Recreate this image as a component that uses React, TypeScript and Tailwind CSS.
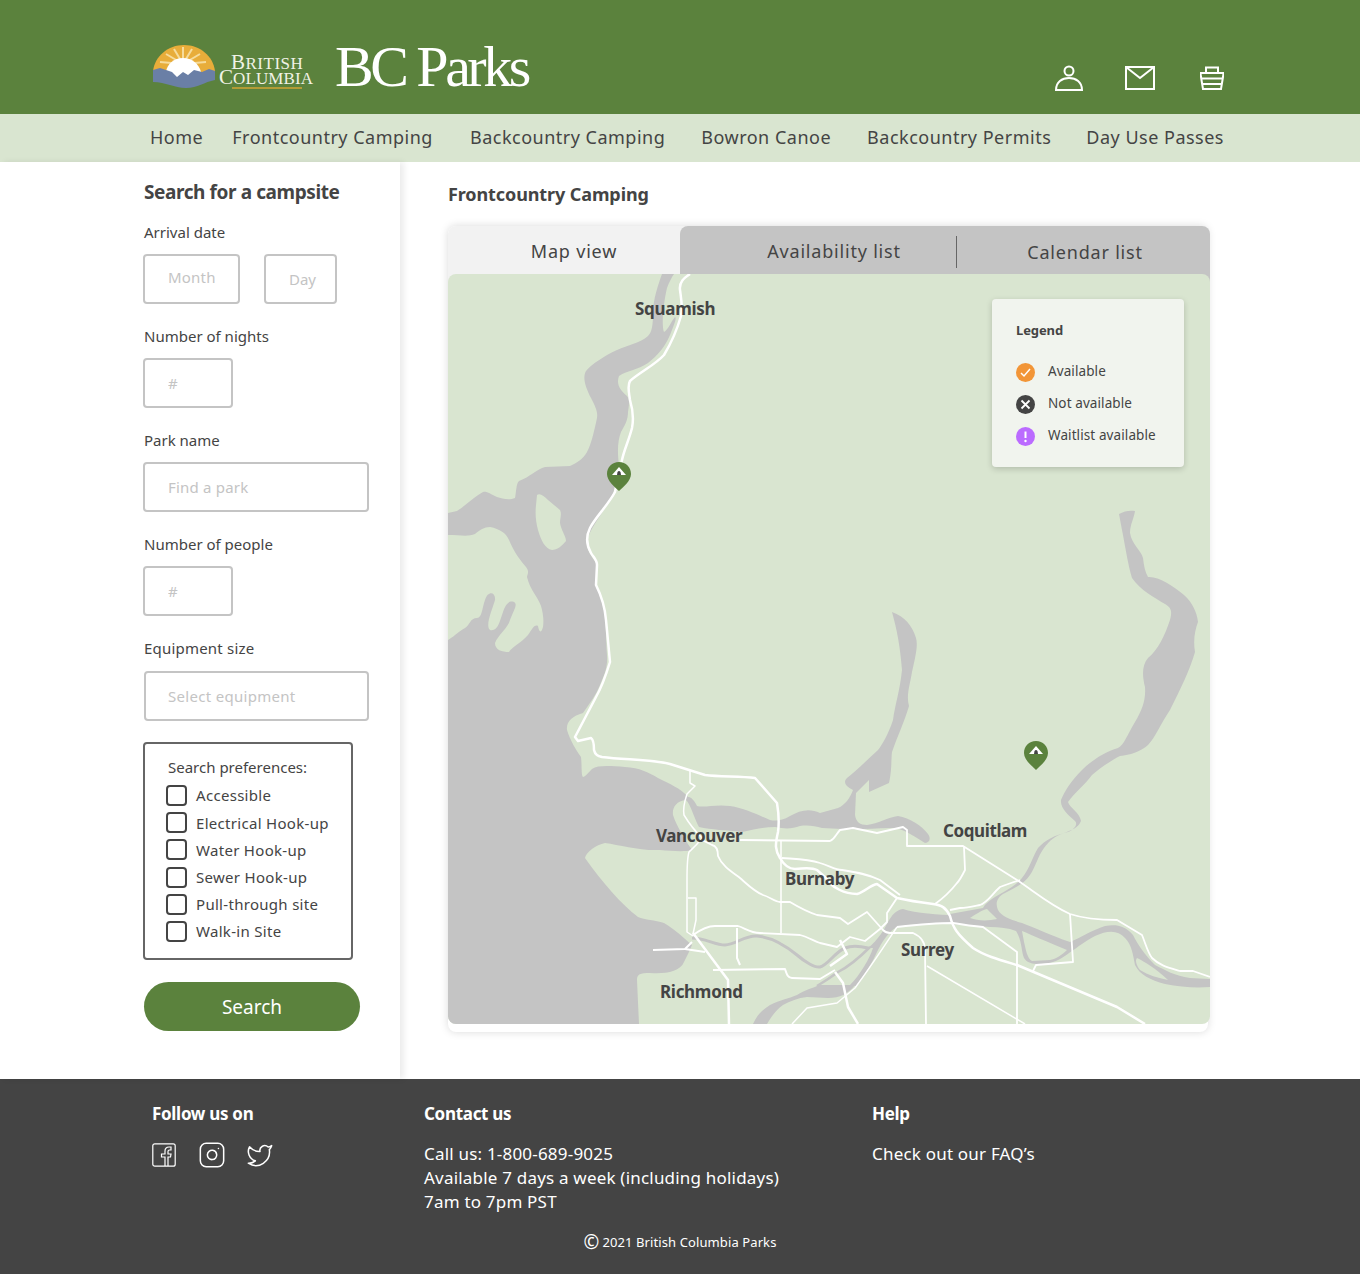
import { Instagram, Twitter } from "lucide-react";

const sans = "font-['Noto_Sans',sans-serif]";

const navItems = [
  { label: "Home", x: "ml-[150px]" },
  { label: "Frontcountry Camping", x: "ml-[29px]" },
  { label: "Backcountry Camping", x: "ml-[37px]" },
  { label: "Bowron Canoe", x: "ml-[36px]" },
  { label: "Backcountry Permits", x: "ml-[36px]" },
  { label: "Day Use Passes", x: "ml-[35px]" },
];

const prefs = ["Accessible", "Electrical Hook-up", "Water Hook-up", "Sewer Hook-up", "Pull-through site", "Walk-in Site"];

// howe sound + strait of georgia + burrard inlet + indian arm
const sea =
  "M662 274 C658 285 653 300 653 313 C653 325 652 332 648 336 C640 343 628 345 617 350 C604 356 592 364 586 371 C582 378 586 388 591 398 C595 406 598 411 597 418 C594 432 591 445 587 452 C583 459 577 463 570 466 L545 467 C537 469 530 477 519 481 C516 483 516 495 515 498 C508 501 502 498 497 497 C490 494 487 491 483 492 C475 496 465 506 457 511 L448 513 L448 535 C460 535 468 537 475 534 C480 530 484 527 490 527 C500 529 506 533 509 540 C514 552 520 560 526 567 C530 572 527 575 527 577 C530 590 538 597 541 606 C543 613 544 620 543 627 C541 634 539 632 538 626 C534 624 532 630 528 635 C522 642 512 647 509 652 C502 652 495 650 495 643 C498 635 508 628 510 620 C514 610 518 604 514 602 C508 600 505 606 503 612 C500 620 498 632 490 630 C485 626 492 610 495 600 C496 592 488 590 485 600 C482 608 482 618 477 618 C470 618 470 625 465 628 C458 632 452 638 448 640 L448 1024 L639 1024 L637 980 C637 974 640 973 650 973 C665 974 680 972 684 962 C688 954 690 950 692 945 C686 940 676 930 664 923 C655 920 645 920 638 917 C622 905 602 882 585 858 C586 852 596 845 605 843 C620 845 640 851 660 850 C672 851 685 852 692 850 C685 840 676 825 673 815 C672 808 676 801 686 800 C690 803 695 820 699 827 C712 830 725 830 742 832 C755 829 765 827 775 827 C785 829 792 829 800 826 C808 825 815 826 822 828 L842 829 C860 830 875 828 890 828 C900 827 908 832 925 843 C930 843 931 838 928 834 C922 826 910 818 898 816 C888 817 878 824 867 825 C860 825 856 822 855 815 L856 793 L869 780 L869 792 L889 783 C892 770 891 760 892 752 C898 735 905 720 909 706 C906 695 910 685 912 672 C916 655 918 645 916 638 C912 625 905 617 892 612 C897 630 900 645 902 670 C900 690 895 705 893 720 C888 735 882 745 878 750 C865 762 855 772 847 778 C843 782 845 786 853 790 C850 798 845 805 838 808 L820 813 C810 808 800 810 790 816 C782 821 775 821 770 820 C760 816 745 808 730 806 C715 804 705 808 697 806 C693 798 690 797 688 797 C680 788 670 784 658 778 C648 772 640 768 625 767 C610 766 598 765 592 769 C588 773 585 777 583 777 C581 775 582 765 581 757 C576 750 570 740 567 730 C566 722 572 716 583 713 C590 703 596 695 600 685 C604 675 608 668 607 655 C606 640 606 625 605 615 C602 600 598 590 596 585 L597 564 C590 555 586 548 587 540 C592 525 605 510 612 497 C615 488 617 478 619 465 C617 450 618 440 621 432 C625 425 628 420 628 412 C629 405 630 400 627 396 C620 390 616 384 619 376 C626 371 638 370 648 363 C658 355 665 347 670 335 C674 325 677 318 675 317 C672 320 668 330 664 332 C661 325 664 300 667 288 C669 282 672 277 674 274 Z";

const lakeIsland = "M537 495 C540 493 544 496 548 500 L560 510 C562 514 560 518 560 523 C561 530 566 536 566 541 C562 546 557 550 552 550 C545 549 541 540 538 530 C536 522 535 515 536 505 Z";

// pitt lake, pitt river and the east end of the fraser
const pitt =
  "M1119 514 C1124 511 1130 510 1135 511 C1134 518 1130 525 1130 533 C1132 545 1141 550 1143 558 C1144 566 1145 572 1148 577 C1158 576 1172 585 1184 595 C1192 602 1197 612 1198 622 C1195 630 1193 640 1195 652 C1190 670 1180 690 1170 710 C1160 725 1155 738 1148 745 C1140 752 1130 755 1120 756 C1112 760 1100 768 1092 775 C1085 785 1075 792 1068 802 C1070 808 1080 813 1081 821 C1078 828 1072 830 1064 833 C1055 836 1050 840 1044 848 C1038 856 1035 868 1030 875 C1025 883 1015 888 1005 893 C997 897 995 903 998 910 C1002 917 1012 920 1022 923 C1035 928 1050 935 1070 942 C1080 938 1092 930 1105 926 C1115 924 1125 925 1133 935 C1138 945 1145 955 1155 965 C1165 970 1175 976 1190 978 L1210 979 L1210 987 C1195 988 1180 987 1165 984 C1150 980 1140 975 1135 965 C1133 955 1132 945 1125 938 C1118 930 1108 930 1095 936 C1085 941 1078 947 1072 951 C1065 956 1058 961 1050 963 C1040 965 1028 965 1024 958 C1021 950 1022 940 1016 931 C1008 928 1000 927 990 927 L950 924 L950 914 L983 908 C985 904 988 902 992 899 C1003 892 1015 887 1022 878 C1030 868 1032 858 1038 848 C1045 840 1055 835 1068 832 C1075 829 1078 824 1075 821 C1068 815 1060 808 1061 800 C1065 790 1072 780 1082 770 C1092 760 1105 752 1118 748 C1124 745 1127 735 1135 722 C1142 710 1146 700 1145 687 C1142 675 1142 665 1148 658 C1158 650 1165 635 1170 620 C1172 612 1172 608 1165 604 C1155 598 1140 590 1132 578 C1128 565 1125 545 1122 530 Z";

const fraserTrunk = "M955 915 C940 915 915 913 903 909 C896 910 892 915 888 922 C884 930 878 940 868 948 L873 948 C870 958 860 975 850 985 L856 986 C865 975 872 963 877 952 C882 942 888 932 897 927 C910 924 935 923 955 923 Z";
const fraserBody = "M855 985 C848 994 840 998 828 998 L807 997 C798 998 790 1001 783 1005 C776 1010 771 1017 767 1024 L753 1024 C757 1015 762 1010 770 1005 C780 1000 790 998 797 995 C805 990 812 988 820 985 C830 985 845 985 855 985 Z";

const greenIslands = [
  "M1022 931 C1032 935 1045 941 1067 950 C1062 955 1056 959 1050 960 L1032 961 C1027 958 1026 950 1024 942 Z",
  "M970 918 C976 914 982 910 987 909 C990 912 994 916 997 919 C988 921 978 921 970 918 Z",
  "M1137 958 C1145 962 1155 968 1168 980 C1158 978 1148 975 1140 970 C1136 965 1135 960 1137 958 Z",
];

const channels: [string, number][] = [
  ["M692 938 C705 938 715 945 725 945 C735 945 745 935 757 936 C770 937 785 945 797 955 C805 962 815 968 820 967 C828 965 835 952 845 948 C852 945 860 946 868 948", 3],
  ["M870 947 C860 957 848 967 838 972 C830 978 822 983 817 986", 2.5],
];

const roads: [string, number][] = [
  ["M690 274 C684 278 679 282 680 290 C681 298 683 307 681 316 C677 330 670 345 664 355 C655 365 640 372 630 381 C627 386 629 392 630 400 C633 410 634 418 632 428 C629 440 624 450 622 460 L615 492 C608 505 595 518 590 528 C585 538 587 546 591 553 C594 558 597 560 597 565 L596 585 C602 597 605 608 606 620 L610 662 C606 675 600 690 596 697 L575 737 L578 741 L591 738 C594 740 594 746 594 750 C595 755 598 756 602 757 C625 760 650 759 670 764 L705 775 C720 777 740 776 755 778 L777 803 C779 815 779 825 778 832 C775 845 775 850 780 858 C784 865 788 869 795 869 C803 868 812 867 817 870 L826 878 C832 888 845 894 857 894 C865 892 870 885 877 884 L897 898 C910 901 925 903 933 904 C942 905 946 908 950 916 C953 928 957 934 973 948 C985 956 1000 960 1017 965 L1117 1007 L1145 1024", 2.5],
  ["M690 770 L690 783 L695 786 L687 794 C684 803 683 810 684 815 C690 825 696 832 702 838 C696 846 692 849 689 852 C687 858 687 870 687 880 L687 932 L693 936", 1.5],
  ["M688 898 L696 898 L696 920 L693 934", 1.5],
  ["M702 840 L712 845 C717 846 718 850 718 856 C722 866 732 872 740 878 C748 885 755 892 763 895 C770 897 775 902 780 902 L790 902 C800 908 808 912 817 915 L840 918 L848 924 L867 912 L883 930 C886 933 888 933 890 933 L913 933 C920 936 925 942 925 950 L926 1024", 1.8],
  ["M740 840 L830 841 C835 839 836 834 840 830 L853 828 L877 833 L903 827 L907 830 L907 846 L963 846 L1017 880 C1035 892 1050 905 1070 914 C1085 919 1100 920 1117 920 L1142 935 C1146 945 1148 953 1152 958 C1160 966 1170 968 1180 971 L1193 971 L1210 977", 1.8],
  ["M781 840 L781 933", 1.5],
  ["M782 858 C795 859 808 859 820 863 C830 866 835 870 842 870 C855 872 868 874 880 880 L900 895", 1.8],
  ["M964 847 L965 870 C962 876 960 880 957 883 C950 892 942 899 935 904", 1.8],
  ["M950 910 L960 908 C968 908 975 906 980 905 C988 902 992 894 1000 887 C1008 884 1014 882 1020 880", 1.8],
  ["M1070 914 L1073 962 L1036 965 L1033 971", 1.8],
  ["M927 966 L1025 1024", 1.5],
  ["M897 927 C915 925 935 923 953 923 C965 925 972 926 983 927 L1017 952 L1017 1024", 1.8],
  ["M897 927 C885 945 872 965 855 988 L837 1003 L807 1008 L792 1024", 1.5],
  ["M835 972 L843 983 L848 1007 L858 1024", 2.5],
  ["M693 933 L728 980 L729 1024", 2.5],
  ["M693 935 C700 930 707 926 715 926 L738 926 C745 928 750 933 760 933 L800 935 C808 937 814 941 820 943 L837 947 L850 937 L865 941 L880 929 L887 922 L887 913 L897 898", 1.8],
  ["M653 950 L685 949 L692 942", 2],
  ["M685 949 L705 952", 1.8],
  ["M737 928 L737 958 L740 965", 2],
  ["M713 970 L785 969 C787 975 788 978 792 978 L820 979 L835 970", 2],
  ["M840 940 L847 954 L830 966", 2.5],
];

function Pin() {
  return (
    <svg width="24" height="29" viewBox="0 0 24 29">
      <path d="M12 0 C19 0 24 5 24 12 C24 19 16 25 12 29 C8 25 0 19 0 12 C0 5 5 0 12 0 Z" fill="#5b823d" />
      <path d="M12 5 L19 13 L5 13 Z" fill="#fff" />
      <path d="M10 13 L10.5 10 Q12 8 13.5 10 L14 13 Z" fill="#444" />
    </svg>
  );
}

// province logo, wordmark included
function Logo() {
  return (
    <svg width="163" height="46" viewBox="0 0 163 46" className="shrink-0">
      <path d="M1 27 C3 12 16 1 32 1 C48 1 61 12 63 27 L63 34 L1 34 Z" fill="#e8ad3a" />
      <g stroke="#f6dc9c" strokeWidth="2">
        <path d="M31 20 L31 3" />
        <path d="M31 20 L22 5" />
        <path d="M31 20 L40 5" />
        <path d="M31 20 L14 10" />
        <path d="M31 20 L48 10" />
        <path d="M31 20 L8 18" />
        <path d="M31 20 L54 18" />
      </g>
      <path d="M14 28 C15 20 22 14 31 14 C40 14 47 20 49 28 L49 34 L14 34 Z" fill="#fff" />
      <path d="M1 26 L8 24 L14 26 L20 28 L25 33 L31 28 L36 31 L42 26 L50 28 L57 25 L63 27 L63 36 C52 38 46 44 34 44 C22 44 14 38 1 38 Z" fill="#6a7fa6" />
      <text x="79" y="25" fontFamily="'Liberation Serif', serif" fontSize="21" letterSpacing="0.5" fill="#f1f2e6">
        B<tspan fontSize="17">RITISH</tspan>
      </text>
      <text x="67" y="40" fontFamily="'Liberation Serif', serif" fontSize="21" letterSpacing="0.1" fill="#f1f2e6">
        C<tspan fontSize="17">OLUMBIA</tspan>
      </text>
      <rect x="80" y="43" width="70" height="2" fill="#b39c36" />
    </svg>
  );
}

function Facebook() {
  return (
    <svg width="24" height="24" viewBox="0 0 24 24" fill="none" stroke="#fff" strokeWidth="1.2">
      <rect x="0.8" y="0.8" width="22.4" height="22.4" rx="2" />
      <path d="M13 23 L13 14 L9.5 14 L9.5 11 L13 11 L13 8 C13 5.5 14.5 4 17 4 L19 4 L19 7 L17.5 7 C16.5 7 16 7.5 16 8.5 L16 11 L19 11 L18.5 14 L16 14 L16 23" />
    </svg>
  );
}

export default function App() {
  return (
    <div className={`${sans} w-[1360px] bg-white text-[#444]`}>
      <header className="h-[114px] bg-[#5b823d] flex items-start">
        <div className="ml-[152px] mt-[44px]">
          <Logo />
        </div>
        <div className="ml-[20px] mt-[32px] font-['Liberation_Serif',serif] text-[58px] leading-[70px] tracking-[-3.5px] text-white whitespace-nowrap">
          BC Parks
        </div>
        <div className="ml-auto mr-[136px] mt-[65px] flex items-center gap-[42px]">
          <svg width="28" height="26" viewBox="0 0 28 26" fill="none" stroke="#fff" strokeWidth="2">
            <circle cx="14" cy="6" r="4.5" />
            <path d="M1 25 C1 17 7 13 14 13 C21 13 27 17 27 25 Z" />
          </svg>
          <svg width="30" height="24" viewBox="0 0 30 24" fill="none" stroke="#fff" strokeWidth="2">
            <rect x="1" y="1" width="28" height="22" />
            <path d="M1 1 L15 12 L29 1" />
          </svg>
          <svg width="24" height="24" viewBox="0 0 24 24" fill="none" stroke="#fff" strokeWidth="2" className="ml-[3px]">
            <path d="M6 7 L6 1.5 L18 1.5 L18 7" />
            <path d="M0.5 7 L23.5 7 L23 11 L21 23 L3 23 L1 11 Z" />
            <path d="M1.500 12.500 L22.500 12.500 M2.500 18 L21.500 18" />
          </svg>
        </div>
      </header>

      <nav className="h-[48px] pb-[2px] bg-[#d9e5d0] flex items-center text-[#444] text-[18px] tracking-[0.5px] whitespace-nowrap">
        {navItems.map((item) => (
          <span key={item.label} className={item.x}>
            {item.label}
          </span>
        ))}
      </nav>

      <div className="flex h-[917px]">
        <aside className="w-[400px] pl-[144px] pt-[16px] shadow-[4px_0_6px_rgba(0,0,0,0.08)]">
          <h2 className="text-[19px] leading-[28px] font-bold tracking-[-0.4px] mb-[14px]">Search for a campsite</h2>
          <div className="text-[15px] leading-[24px] mb-[10px]">Arrival date</div>
          <div className="flex gap-[24px] mb-[20px] -ml-px">
            <input
              placeholder="Month"
              className="w-[97px] h-[50px] rounded-[4px] border-2 border-[#c4c4c4] pl-[23px] pb-[4px] text-[15px] tracking-[0.2px] placeholder:text-[#c4c4c4] outline-none"
            />
            <input
              placeholder="Day"
              className="w-[73px] h-[50px] rounded-[4px] border-2 border-[#c4c4c4] pl-[23px] text-[15px] placeholder:text-[#c4c4c4] outline-none"
            />
          </div>

          <div className="text-[15px] leading-[24px] mb-[10px]">Number of nights</div>
          <input
            placeholder="#"
            className="block -ml-px w-[90px] h-[50px] rounded-[4px] border-2 border-[#c4c4c4] pl-[23px] text-[15px] placeholder:text-[#c4c4c4] outline-none mb-[20px]"
          />

          <div className="text-[15px] leading-[24px] mb-[10px]">Park name</div>
          <input
            placeholder="Find a park"
            className="block -ml-px w-[226px] h-[50px] rounded-[4px] border-2 border-[#c4c4c4] pl-[23px] text-[15px] tracking-[0.2px] placeholder:text-[#c4c4c4] outline-none mb-[20px]"
          />

          <div className="text-[15px] leading-[24px] mb-[10px]">Number of people</div>
          <input
            placeholder="#"
            className="block -ml-px w-[90px] h-[50px] rounded-[4px] border-2 border-[#c4c4c4] pl-[23px] text-[15px] placeholder:text-[#c4c4c4] outline-none mb-[20px]"
          />

          <div className="text-[15px] leading-[24px] tracking-[0.2px] mb-[11px]">Equipment size</div>
          <input
            placeholder="Select equipment"
            className="block w-[225px] h-[50px] rounded-[4px] border-2 border-[#c4c4c4] pl-[22px] text-[15px] tracking-[0.3px] placeholder:text-[#c4c4c4] outline-none mb-[21px]"
          />

          <div className="-ml-px w-[210px] h-[218px] rounded-[4px] border-2 border-[#666] pt-[11px] pl-[21px]">
            <div className="text-[15px] leading-[24px] ml-[2px] mb-[3px]">Search preferences:</div>
            {prefs.map((p) => (
              <label key={p} className="flex items-center h-[27.2px] text-[15px] tracking-[0.3px]">
                <span className="w-[21px] h-[21px] rounded-[4px] border-2 border-[#444] mr-[9px] shrink-0" />
                {p}
              </label>
            ))}
          </div>
          <button className="mt-[22px] block w-[216px] h-[49px] pt-[2px] rounded-full bg-[#5b823d] text-white text-[19px]">Search</button>
        </aside>

        <main className="pl-[48px] pt-[18px]">
          <h1 className="text-[18px] leading-[28px] font-bold tracking-[-0.1px] mb-[18px]">Frontcountry Camping</h1>
          <div className="w-[760px] h-[806px] rounded-[8px] bg-white shadow-[0_0_8px_rgba(0,0,0,0.15)]">
            <div className="w-[762px] h-[48px] flex text-[18px] tracking-[0.8px] rounded-t-[8px] overflow-hidden bg-[#f2f2f2]">
              <div className="w-[232px] text-center leading-[50px] pl-[20px]">Map view</div>
              <div className="flex-1 flex items-center bg-[#c4c4c4] rounded-tl-[8px]">
                <div className="w-[276px] text-center pl-[32px] pt-[2px]">Availability list</div>
                <div className="w-px h-[32px] bg-[#666] mt-[4px]" />
                <div className="flex-1 text-center pl-[3px] pt-[4px]">Calendar list</div>
              </div>
            </div>
            <div className="relative w-[762px] h-[750px] bg-[linear-gradient(to_right,#f2f2f2_30%,#c4c4c4_30%)] bg-no-repeat bg-[length:100%_12px]">
              <svg width="762" height="750" viewBox="448 274 762 750" className="block rounded-[8px] bg-[#d9e5d0]">
                <path d={sea} fill="#c4c4c4" />
                <path d={lakeIsland} fill="#d9e5d0" />
                <path d={pitt} fill="#c4c4c4" />
                <path d={fraserTrunk} fill="#c4c4c4" />
                <path d={fraserBody} fill="#c4c4c4" />
                {channels.map(([d, sw]) => (
                  <path key={d} d={d} fill="none" stroke="#c4c4c4" strokeWidth={sw} />
                ))}
                {greenIslands.map((d) => (
                  <path key={d} d={d} fill="#d9e5d0" />
                ))}
                {roads.map(([d, sw]) => (
                  <path key={d} d={d} fill="none" stroke="#fff" strokeWidth={sw} strokeLinejoin="round" />
                ))}
              </svg>

              <span className="absolute left-[187px] top-[21px] text-[17px] leading-[28px] font-bold tracking-[-0.3px]">Squamish</span>
              <span className="absolute left-[208px] top-[548px] text-[17px] leading-[28px] font-bold tracking-[-0.4px]">Vancouver</span>
              <span className="absolute left-[337px] top-[591px] text-[17px] leading-[28px] font-bold tracking-[-0.3px]">Burnaby</span>
              <span className="absolute left-[495px] top-[543px] text-[17px] leading-[28px] font-bold tracking-[-0.4px]">Coquitlam</span>
              <span className="absolute left-[453px] top-[662px] text-[17px] leading-[28px] font-bold tracking-[-0.3px]">Surrey</span>
              <span className="absolute left-[212px] top-[704px] text-[17px] leading-[28px] font-bold tracking-[-0.3px]">Richmond</span>

              <div className="absolute left-[159px] top-[188px]">
                <Pin />
              </div>
              <div className="absolute left-[576px] top-[467px]">
                <Pin />
              </div>

              <div className="absolute left-[544px] top-[25px] w-[192px] h-[168px] rounded-[4px] bg-[#f1f4ee] shadow-[0_2px_6px_rgba(0,0,0,0.18)] pl-[24px] pt-[21px] text-[13.5px] tracking-[0.1px]">
                <div className="font-bold text-[13px] leading-[20px] tracking-[-0.1px] mb-[16px]">Legend</div>
                <div className="flex items-center h-[32px]">
                  <svg width="19" height="19" viewBox="0 0 19 19" className="mr-[13px]">
                    <circle cx="9.500" cy="9.500" r="9.500" fill="#f29537" />
                    <path d="M5 10 L8 13 L14 6" fill="none" stroke="#fff" strokeWidth="1.5" />
                  </svg>
                  <span className="-mt-[2px]">Available</span>
                </div>
                <div className="flex items-center h-[32px]">
                  <svg width="19" height="19" viewBox="0 0 19 19" className="mr-[13px]">
                    <circle cx="9.500" cy="9.500" r="9.500" fill="#444" />
                    <path d="M5.500 5.500 L13.500 13.500 M13.500 5.500 L5.500 13.500" fill="none" stroke="#fff" strokeWidth="1.8" />
                  </svg>
                  <span className="-mt-[2px]">Not available</span>
                </div>
                <div className="flex items-center h-[32px]">
                  <svg width="19" height="19" viewBox="0 0 19 19" className="mr-[13px]">
                    <circle cx="9.500" cy="9.500" r="9.500" fill="#bb6bff" />
                    <path d="M9.500 4.500 L9.500 11" fill="none" stroke="#fff" strokeWidth="2" />
                    <circle cx="9.500" cy="14" r="1.200" fill="#fff" />
                  </svg>
                  <span className="-mt-[2px]">Waitlist available</span>
                </div>
              </div>
            </div>
          </div>
        </main>
      </div>

      <footer className="h-[195px] bg-[#444] text-white text-[17px] tracking-[0.2px] leading-[24px] pt-[23px]">
        <div className="flex">
          <div className="ml-[152px] w-[272px]">
            <div className="font-bold tracking-[-0.3px]">Follow us on</div>
            <div className="flex items-center gap-[22px] mt-[15px]">
              <Facebook />
              <Instagram size={28} strokeWidth={1.3} />
              <Twitter size={28} strokeWidth={1.3} className="-ml-[2px]" />
            </div>
          </div>
          <div className="w-[448px]">
            <div className="font-bold tracking-[-0.3px] mb-[16px]">Contact us</div>
            <div>Call us: 1-800-689-9025</div>
            <div>Available 7 days a week (including holidays)</div>
            <div>7am to 7pm PST</div>
          </div>
          <div>
            <div className="font-bold tracking-[-0.3px] mb-[16px]">Help</div>
            <div>Check out our FAQ’s</div>
          </div>
        </div>
        <div className="mt-[18px] text-[13px] tracking-[0.1px] text-center leading-[20px] flex items-center justify-center gap-[3px]">
          <span className="text-[19px]">©</span>
          <span>2021 British Columbia Parks</span>
        </div>
      </footer>
    </div>
  );
}
